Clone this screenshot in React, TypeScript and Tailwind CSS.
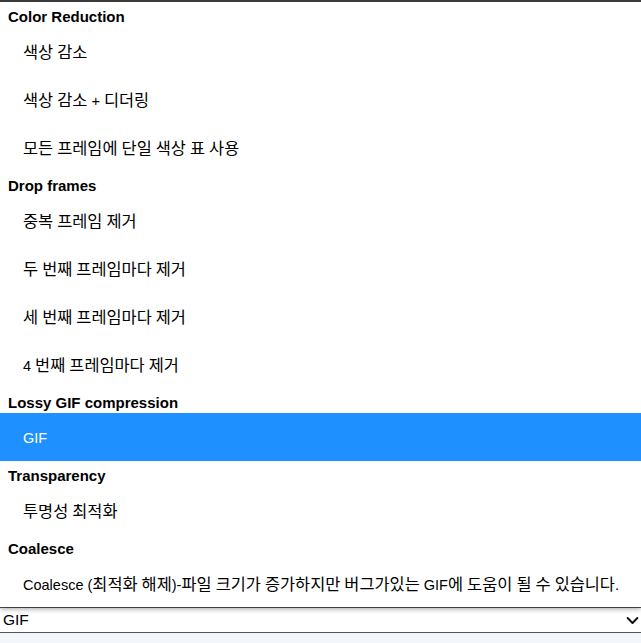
import React from 'react';

interface Group {
  label: string;
  options: string[];
}

const groups: Group[] = [
  {
    label: 'Color Reduction',
    options: ['색상 감소', '색상 감소 + 디더링', '모든 프레임에 단일 색상 표 사용'],
  },
  {
    label: 'Drop frames',
    options: [
      '중복 프레임 제거',
      '두 번째 프레임마다 제거',
      '세 번째 프레임마다 제거',
      '4 번째 프레임마다 제거',
    ],
  },
  { label: 'Lossy GIF compression', options: ['GIF'] },
  { label: 'Transparency', options: ['투명성 최적화'] },
  {
    label: 'Coalesce',
    options: ['Coalesce (최적화 해제)-파일 크기가 증가하지만 버그가있는 GIF에 도움이 될 수 있습니다.'],
  },
];

const selected = 'GIF';

// Hangul in the shot is a touch bigger than the latin text around it
function Label({ text }: { text: string }) {
  const parts = text.split(/([\uAC00-\uD7A3]+)/);
  return (
    <span>
      {parts.map((p, i) =>
        /[\uAC00-\uD7A3]/.test(p) ? (
          <span key={i} className="text-[16.4px]">
            {p}
          </span>
        ) : (
          <span key={i}>{p}</span>
        )
      )}
    </span>
  );
}

export default function App() {
  return (
    <div
      className="w-[641px] h-[643px] overflow-hidden bg-[#f3f6fa] flex flex-col text-black"
      style={{ fontFamily: '"Liberation Sans", "Noto Sans CJK KR", Arial, sans-serif' }}
    >
      {/* Open dropdown list */}
      <div className="relative z-10 bg-white border-t-2 border-[#3a3a3a] shadow-[0_2px_5px_rgba(0,0,0,0.35)]">
        {groups.map((group) => (
          <div key={group.label}>
            <div className="h-[25px] flex items-center pt-[5px] pl-[8px] text-[15px] font-bold">
              {group.label}
            </div>
            {group.options.map((opt) => (
              <div
                key={opt}
                className={`h-12 flex items-center pt-[3px] pl-[23px] text-[14.5px] ${
                  opt === selected ? 'bg-[#1e90ff] text-white' : ''
                }`}
              >
                <Label text={opt} />
              </div>
            ))}
          </div>
        ))}
      </div>

      {/* Select control */}
      <div className="h-[26px] bg-white border-t border-b border-[#555] flex items-center justify-between pl-[3px] pr-[2px] text-[15.5px]">
        <span>GIF</span>
        <svg className="w-[13px] h-[13px]" viewBox="0 0 16 16" fill="none">
          <path d="M2 5 8 11l6-6" stroke="#111" strokeWidth={2.4} strokeLinecap="round" strokeLinejoin="round" />
        </svg>
      </div>
    </div>
  );
}
